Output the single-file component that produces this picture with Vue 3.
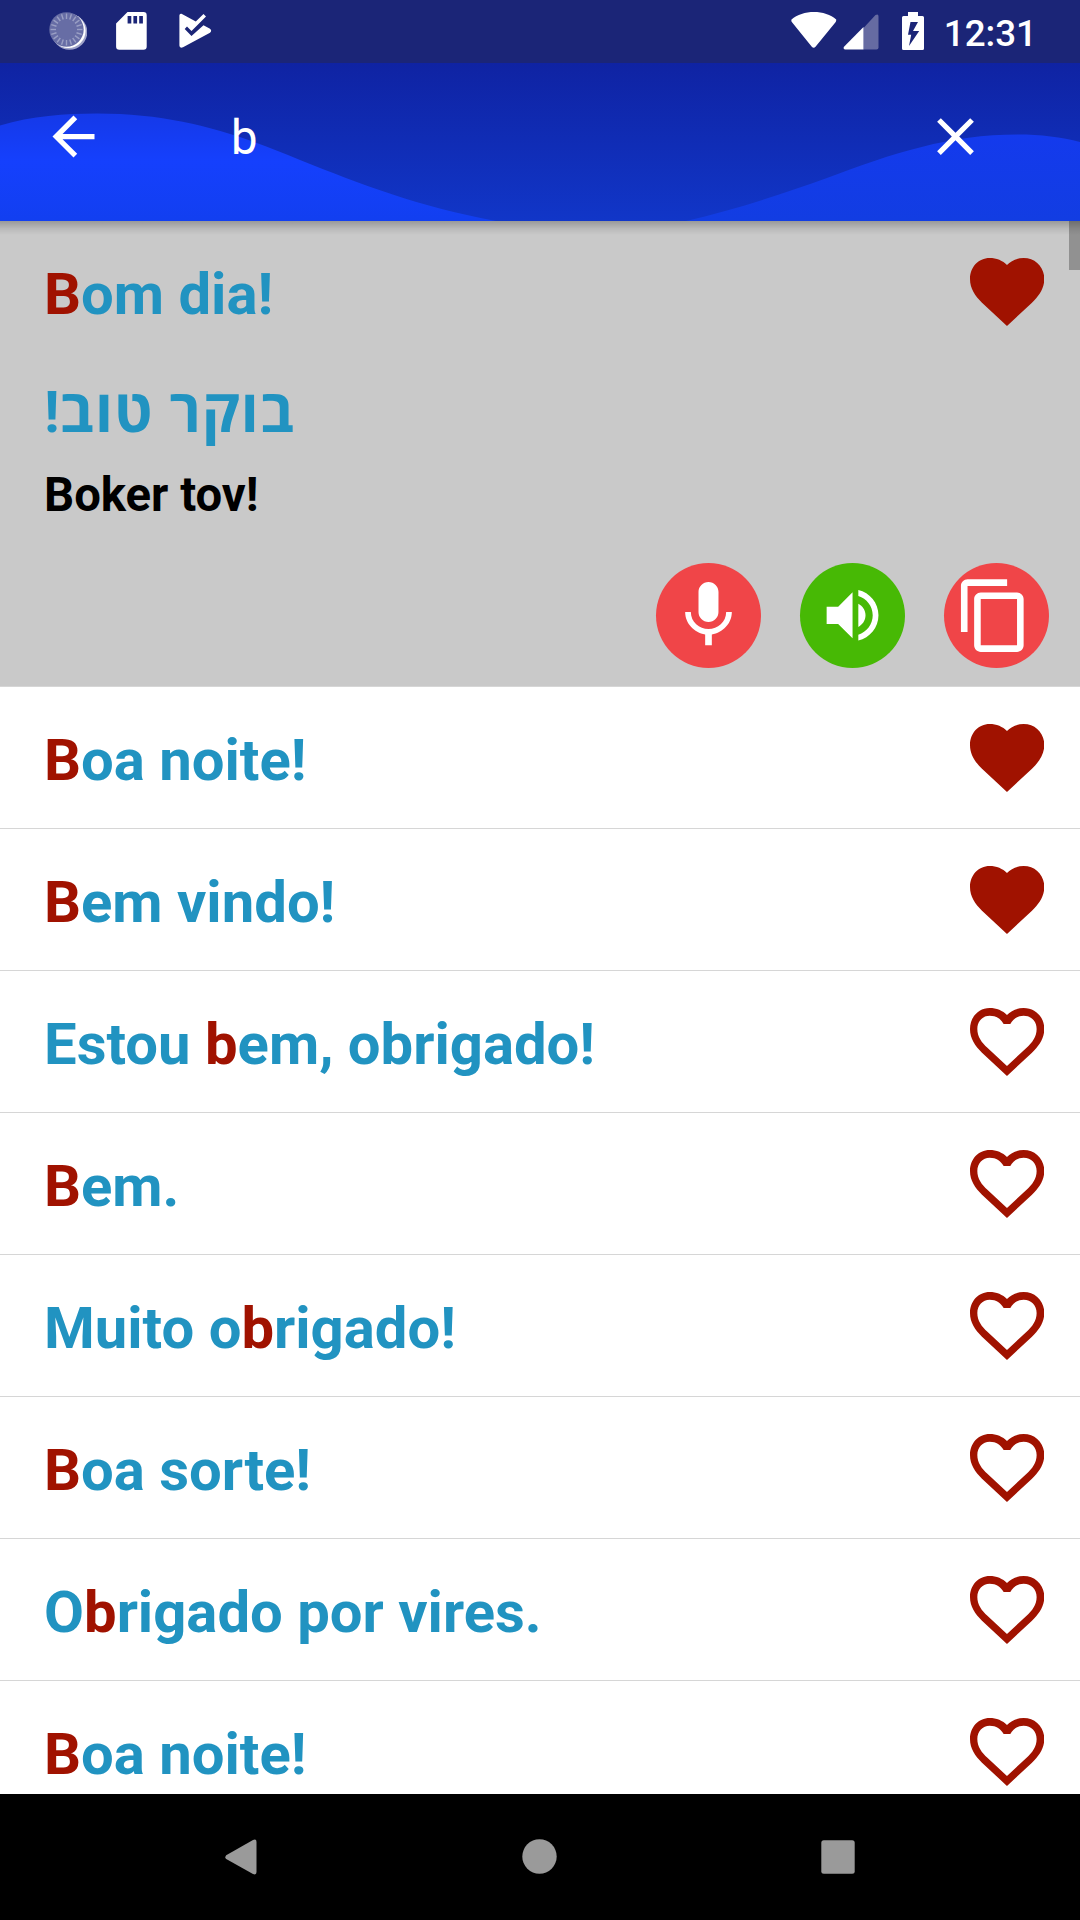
<script setup>
const phrases = [
  { parts: ['', 'B', 'oa noite!'], liked: true },
  { parts: ['', 'B', 'em vindo!'], liked: true },
  { parts: ['Estou ', 'b', 'em, obrigado!'], liked: false },
  { parts: ['', 'B', 'em.'], liked: false },
  { parts: ['Muito o', 'b', 'rigado!'], liked: false },
  { parts: ['', 'B', 'oa sorte!'], liked: false },
  { parts: ['O', 'b', 'rigado por vires.'], liked: false },
  { parts: ['', 'B', 'oa noite!'], liked: false },
]
const heartOuter =
  'M200 105C188 92 168 84 148 84C114 84 89 112 89 147C89 175 104 198 125 218L200 288L275 218C296 198 312 175 312 147C312 112 286 84 250 84C231 84 212 92 200 105Z'
const heartInner =
  'M190 132H210C218 117 232 107 250 107C273 107 289 124 289 147C289 170 276 188 258 204L200 258L142 204C124 188 111 170 111 147C111 124 127 107 148 107C168 107 182 117 190 132Z'
const ticks = Array.from({ length: 20 }, (_, i) => i * 18)
</script>

<template>
  <div class="screen">
    <div class="status">
      <div class="status-left">
        <svg width="38" height="39" viewBox="49 12 38 39">
          <circle cx="69.5" cy="32" r="17.8" fill="#9ea2c8" />
          <circle cx="68.3" cy="30.8" r="17.3" fill="#fff" />
          <circle cx="66.5" cy="29.5" r="17.2" fill="#676da5" />
          <path
            v-for="a in ticks"
            :key="a"
            d="M66.5 13.5v5.5"
            stroke="#9a9fc4"
            stroke-width="1.4"
            :transform="`rotate(${a} 66.5 29.5)`"
          />
        </svg>
        <svg class="sd" width="31" height="38" viewBox="116 12.5 31 38">
          <path
            fill="#fff"
            fill-rule="evenodd"
            d="M127.5 12.5H143.500a3.200 3.200 0 0 1 3.200 3.200V47a3.200 3.200 0 0 1-3.200 3.200H119.300a3.200 3.200 0 0 1-3.200-3.200V24zM127.600 16.500v7.500h3.700v-7.500zM133.400 16.500v7.500h3.700v-7.500zM139.200 16.500v7.500h3.700v-7.500z"
          />
        </svg>
        <svg class="play" width="33" height="36" viewBox="179 13.500 33 36">
          <path
            fill="#fff"
            d="M181.500 14.300L195.800 22L203.500 14.500L206 17L191.500 31.600L187 27L184.700 29.600L191.500 36.600L203.500 25.800L210 29.300Q212.300 31.200 210 33.200L183 47.800Q179.400 49 179.400 46V16Q179.500 13.800 181.500 14.300Z"
          />
        </svg>
      </div>
      <div class="status-right">
        <svg width="46" height="37" viewBox="791.500 13 46 37">
          <path fill="#fff" d="M792 20.500C803 10.500 826 10.500 836.700 20.500Q836.900 22 836 23.200L816 47.700Q814.200 50 812.300 47.700L792.500 23.200Q791.500 22 792 20.500Z" />
        </svg>
        <svg class="signal" width="36" height="36" viewBox="843.500 14.500 36 36">
          <path fill="#666ba2" d="M864 28.500L876 15.600Q879 13.800 879 17V48a2 2 0 0 1-2 2H864z" />
          <path fill="#fff" d="M864 27.500V50H845.500Q843.300 49.500 844.500 47.200z" />
        </svg>
        <svg class="battery" width="22" height="38" viewBox="902 12 22 38">
          <path
            fill="#fff"
            fill-rule="evenodd"
            d="M908 12h10v4h4.500a1.500 1.500 0 0 1 1.500 1.500v31a1.500 1.500 0 0 1-1.500 1.500h-19a1.500 1.500 0 0 1-1.500-1.500v-31a1.500 1.500 0 0 1 1.500-1.500h4.500zM910.500 22L908 34.800h3.200L909 46L919.200 31h-6.200L918 22z"
          />
        </svg>
        <span class="clock">12:31</span>
      </div>
    </div>

    <header class="bar">
      <svg class="waves" width="1080" height="158" viewBox="0 0 1080 158">
        <defs>
          <linearGradient id="waveLeft" gradientUnits="userSpaceOnUse" x1="0" y1="50" x2="0" y2="158">
            <stop offset="0" stop-color="#1539e8" />
            <stop offset="0.45" stop-color="#1540fd" />
            <stop offset="1" stop-color="#123ff0" />
          </linearGradient>
          <linearGradient id="waveRight" gradientUnits="userSpaceOnUse" x1="0" y1="71" x2="0" y2="158">
            <stop offset="0" stop-color="#143aed" />
            <stop offset="1" stop-color="#123de2" />
          </linearGradient>
        </defs>
        <path fill="url(#waveLeft)" d="M0 62.500C32 53 65 50.500 97 50.500C180 50.500 240 72 300 97C360 121 420 144 496 158H0Z" />
        <path fill="url(#waveRight)" d="M686 158C730 148 780 132 827 115C893 90 950 71.500 1018 71.500C1040 71.500 1062 74 1080 79V158Z" />
      </svg>
      <svg class="back" width="63" height="63" viewBox="0 0 24 24">
        <path fill="#fff" d="M20 11H7.830l5.590-5.590L12 4l-8 8 8 8 1.410-1.410L7.830 13H20v-2z" />
      </svg>
      <span class="query">b</span>
      <svg class="close" width="63" height="63" viewBox="0 0 24 24">
        <path fill="#fff" d="M19 6.410L17.590 5 12 10.590 6.410 5 5 6.410 10.590 12 5 17.590 6.410 19 12 13.410 17.590 19 19 17.590 13.410 12z" />
      </svg>
    </header>

    <main class="list">
      <section class="card">
        <div class="row">
          <span class="phrase"><b>B</b>om dia!</span>
          <svg class="heart" viewBox="89 84 223 204"><path :d="heartOuter" /></svg>
        </div>
        <div class="hebrew"><span dir="rtl" lang="he"><span class="letters">בוקר טוב</span>!</span></div>
        <div class="translit">Boker tov!</div>
        <div class="actions">
          <svg class="round red" viewBox="0 0 315 315">
            <path
              transform="translate(37.500 37) scale(10)"
              d="M12 14c1.660 0 2.990-1.340 2.990-3L15 5c0-1.660-1.340-3-3-3S9 3.340 9 5v6c0 1.660 1.340 3 3 3zm5.300-3c0 3-2.540 5.100-5.300 5.100S6.700 14 6.700 11H5c0 3.410 2.720 6.230 6 6.720V21h2v-3.280c3.280-.48 6-3.300 6-6.720h-1.700z"
            />
          </svg>
          <svg class="round green" viewBox="0 0 315 315">
            <path
              transform="translate(54 53.300) scale(8.640)"
              d="M3 9v6h4l5 5V4L7 9H3zm13.500 3c0-1.770-1.020-3.290-2.500-4.030v8.050c1.480-.73 2.500-2.250 2.500-4.020zM14 3.230v2.060c2.890.86 5 3.540 5 6.710s-2.110 5.850-5 6.710v2.060c4.010-.91 7-4.490 7-8.770s-2.990-7.860-7-8.770z"
            />
          </svg>
          <svg class="round red" viewBox="0 0 315 315">
            <path
              transform="translate(31 39) scale(9.900)"
              d="M16 1H4c-1.100 0-2 .9-2 2v14h2V3h12V1zm3 4H8c-1.100 0-2 .9-2 2v14c0 1.100.9 2 2 2h11c1.100 0 2-.9 2-2V7c0-1.100-.9-2-2-2zm0 16H8V7h11v14z"
            />
          </svg>
        </div>
      </section>
      <div v-for="(p, i) in phrases" :key="i" class="row item">
        <span class="phrase">{{ p.parts[0] }}<b>{{ p.parts[1] }}</b>{{ p.parts[2] }}</span>
        <svg class="heart" viewBox="89 84 223 204">
          <path fill-rule="evenodd" :d="p.liked ? heartOuter : heartOuter + heartInner" />
        </svg>
      </div>
      <div class="scrollbar"></div>
      <div class="shade"></div>
    </main>

    <nav class="nav">
      <svg width="32" height="36" viewBox="0 0 32 36">
        <path fill="#9a9a9a" d="M28 1Q31.500-.5 31.500 3V33Q31.500 36.500 28 35L1.200 20Q-.5 18.200 1.200 16.300Z" />
      </svg>
      <svg width="35" height="35" viewBox="0 0 35 35"><circle cx="17.500" cy="17.500" r="17.200" fill="#9a9a9a" /></svg>
      <svg width="34" height="34" viewBox="0 0 34 34"><rect x=".3" y=".3" width="33.400" height="33.400" rx="2.500" fill="#9a9a9a" /></svg>
    </nav>
  </div>
</template>

<style>
body {
  margin: 0;
}
</style>

<style scoped>
.screen {
  width: 1080px;
  height: 1920px;
  display: flex;
  flex-direction: column;
  overflow: hidden;
  background: #fff;
  font-family: Roboto, 'Open Sans', sans-serif;
}
svg {
  display: block;
  flex: none;
}
.status {
  flex: none;
  height: 63px;
  display: flex;
  justify-content: space-between;
  background: #1b2577;
}
.status-left,
.status-right {
  display: flex;
  align-items: flex-start;
}
.status-left {
  padding: 12px 0 0 49px;
}
.sd {
  margin-left: 29px;
}
.play {
  margin: 1px 0 0 32px;
}
.status-right {
  padding: 12px 43px 0 0;
}
.signal {
  margin: 2px 0 0 6px;
}
.battery {
  margin-left: 22.5px;
}
.clock {
  margin-left: 20px;
  font-size: 36.75px;
  font-weight: 500;
  line-height: 43px;
  color: #fff;
}
.bar {
  flex: none;
  position: relative;
  height: 158px;
  box-sizing: border-box;
  display: flex;
  align-items: center;
  padding: 0 93px 11px 42px;
  background: linear-gradient(#0f23a3, #1136c8);
}
.waves {
  position: absolute;
  left: 0;
  top: 0;
}
.back,
.query,
.close {
  position: relative;
}
.query {
  flex: 1;
  margin-left: 126px;
  padding-top: 3px;
  font-size: 47.25px;
  line-height: 56px;
  color: #fff;
}
.list {
  flex: 1;
  min-height: 0;
  position: relative;
  overflow: hidden;
}
.row {
  height: 141px;
  display: flex;
  justify-content: space-between;
  align-items: flex-start;
  padding: 0 36px 0 44px;
}
.item {
  border-bottom: 1px solid #d6d6d6;
}
.phrase {
  margin-top: 39px;
  font-size: 58px;
  font-weight: 700;
  line-height: 68px;
  color: #2193c1;
  white-space: pre;
}
.phrase b {
  font-weight: 700;
  color: #a01200;
}
.heart {
  width: 74.300px;
  height: 68px;
  margin-top: 37px;
  fill: #a01200;
}
.card {
  height: 465px;
  background: #c9c9c9;
  border-bottom: 1px solid #d6d6d6;
}
.hebrew {
  height: 70px;
  margin-top: 15px;
  padding-left: 44px;
  font-size: 57.75px;
  font-weight: 700;
  line-height: 70px;
  color: #2193c1;
}
.letters {
  font-size: 59px;
  letter-spacing: 1.2px;
  line-height: 1;
}
.translit {
  height: 56px;
  margin-top: 20px;
  padding-left: 44px;
  font-size: 47.25px;
  font-weight: 700;
  line-height: 56px;
  color: #000;
}
.actions {
  display: flex;
  justify-content: flex-end;
  gap: 39px;
  margin-top: 40px;
  padding-right: 31px;
}
.round {
  width: 105px;
  height: 105px;
  border-radius: 50%;
  fill: #fff;
}
.red {
  background: #f04548;
}
.green {
  background: #47b905;
}
.scrollbar {
  position: absolute;
  top: 0;
  right: 0;
  width: 11px;
  height: 49px;
  background: #919191;
}
.shade {
  position: absolute;
  top: 0;
  left: 0;
  width: 100%;
  height: 14px;
  background: linear-gradient(rgba(0, 0, 0, 0.24), rgba(0, 0, 0, 0.08) 55%, rgba(0, 0, 0, 0));
}
.nav {
  flex: none;
  height: 126px;
  box-sizing: border-box;
  display: flex;
  justify-content: space-between;
  align-items: center;
  padding: 0 225px 1px;
  background: #000;
}
</style>
